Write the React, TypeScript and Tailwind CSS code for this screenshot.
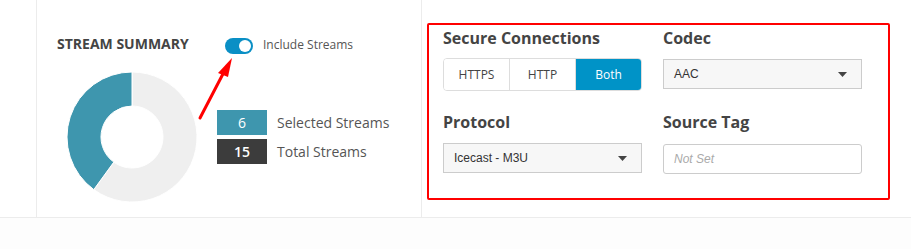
const HEADING = "font-['Open_Sans',sans-serif]";
const ARIAL = "font-['Liberation_Sans',Arial,sans-serif]";

function Caret() {
  return (
    <svg width="9" height="5" viewBox="0 0 9 5" className="shrink-0">
      <path d="M0 0h9L4.5 5z" fill="#444" />
    </svg>
  );
}

function Donut() {
  // 6 of 15 streams selected -> 40% teal, counter-clockwise from 12 o'clock
  return (
    <svg width="132" height="132" viewBox="-1 -1 132 132" className="shrink-0">
      <path
        d="M65 0A65 65 0 1 1 26.8 117.6L46.8 90.1A31 31 0 1 0 65 34Z"
        fill="#efefef"
        stroke="#fff"
        strokeWidth="1"
      />
      <path
        d="M65 0A65 65 0 0 0 26.8 117.6L46.8 90.1A31 31 0 0 1 65 34Z"
        fill="#3e96ae"
        stroke="#fff"
        strokeWidth="1"
      />
    </svg>
  );
}

function SummaryPanel() {
  return (
    <div className="relative flex w-[385px] shrink-0 flex-col border-r border-[#ececec] pl-[20px] pt-[33px]">
      <div className="flex h-[24px] items-center">
        <h2
          className={`${HEADING} w-[168px] pb-[4px] text-[14px] font-bold uppercase text-[#444]`}
        >
          Stream Summary
        </h2>
        <div className="relative mt-[2px] h-[16px] w-[28px] rounded-full bg-[#0a8fc5]">
          <span className="absolute right-[2px] top-[2px] h-[12px] w-[12px] rounded-full bg-white" />
        </div>
        <span className={`${HEADING} ml-[10px] text-[12px] text-[#555]`}>
          Include Streams
        </span>
      </div>

      <div className="mt-[14px] flex items-center">
        <div className="ml-[9px]">
          <Donut />
        </div>
        <div className="ml-[19px] flex flex-col gap-[4px]">
          <div className="flex items-center">
            <span
              className={`${HEADING} flex h-[25px] w-[50px] items-center justify-center bg-[#3e96ae] text-[14px] text-white`}
            >
              6
            </span>
            <span className={`${HEADING} ml-[10px] text-[14px] text-[#555]`}>
              Selected Streams
            </span>
          </div>
          <div className="flex items-center">
            <span
              className={`${HEADING} flex h-[25px] w-[50px] items-center justify-center bg-[#3c3c3c] text-[14px] font-semibold text-white`}
            >
              15
            </span>
            <span className={`${HEADING} ml-[10px] text-[14px] text-[#555]`}>
              Total Streams
            </span>
          </div>
        </div>
      </div>

      {/* annotation arrow pointing at the toggle */}
      <svg
        className="pointer-events-none absolute left-[160px] top-[54px]"
        width="80"
        height="70"
        viewBox="0 0 80 70"
      >
        <line x1="3" y1="64" x2="28" y2="16" stroke="#f00" strokeWidth="3" strokeLinecap="round" />
        <path d="M35 4L21 19L31 23Z" fill="#f00" />
      </svg>
    </div>
  );
}

function SegmentButton({
  label,
  active,
  last,
}: {
  label: string;
  active?: boolean;
  last?: boolean;
}) {
  return (
    <button
      className={`${HEADING} flex flex-1 items-center justify-center text-[12px] ${
        active ? "bg-[#0093c7] text-white" : "bg-white text-[#444]"
      } ${last ? "" : "border-r border-[#ddd]"}`}
    >
      {label}
    </button>
  );
}

function SelectBox({ value }: { value: string }) {
  return (
    <div
      className={`${ARIAL} flex h-[30px] items-center justify-between border border-[#ccc] bg-[#f7f7f7] pl-[10px] pr-[14px] text-[12px] text-[#333]`}
    >
      <span>{value}</span>
      <Caret />
    </div>
  );
}

function SettingsPanel() {
  return (
    <div className="flex-1 pl-[5px] pt-[23px]">
      <div className="h-[177px] w-[463px] rounded-[2px] border-2 border-[#ff0000] pl-[14px] pr-[25px]">
        <div className="grid grid-cols-[199px_199px] gap-x-[21px]">
          <div>
            <h3 className={`${HEADING} mt-[1px] text-[16px] font-bold leading-[24px] text-[#444]`}>
              Secure Connections
            </h3>
            <div className="mt-[8px] flex h-[33px] overflow-hidden rounded-[4px] border border-[#ddd]">
              <SegmentButton label="HTTPS" />
              <SegmentButton label="HTTP" />
              <SegmentButton label="Both" active last />
            </div>
          </div>
          <div>
            <h3 className={`${HEADING} mt-[1px] text-[16px] font-bold leading-[24px] text-[#444]`}>
              Codec
            </h3>
            <div className="mt-[9px]">
              <SelectBox value="AAC" />
            </div>
          </div>
          <div>
            <h3 className={`${HEADING} mt-[19px] text-[16px] font-bold leading-[24px] text-[#444]`}>
              Protocol
            </h3>
            <div className="mt-[9px]">
              <SelectBox value="Icecast - M3U" />
            </div>
          </div>
          <div>
            <h3 className={`${HEADING} mt-[19px] text-[16px] font-bold leading-[24px] text-[#444]`}>
              Source Tag
            </h3>
            <input
              placeholder="Not Set"
              className={`${ARIAL} mt-[10px] h-[30px] w-full rounded-[3px] border border-[#ccc] bg-white px-[10px] text-[12px] italic text-[#333] outline-none placeholder:text-[#aaa]`}
            />
          </div>
        </div>
      </div>
    </div>
  );
}

export default function App() {
  return (
    <div className="h-[249px] w-[911px] overflow-hidden bg-white">
      <div className="flex h-[218px] border-b border-[#ececec]">
        <div className="w-[37px] shrink-0 border-r border-[#ececec]" />
        <SummaryPanel />
        <SettingsPanel />
      </div>
      <div className="h-[31px] bg-[#fdfdfd]" />
    </div>
  );
}
